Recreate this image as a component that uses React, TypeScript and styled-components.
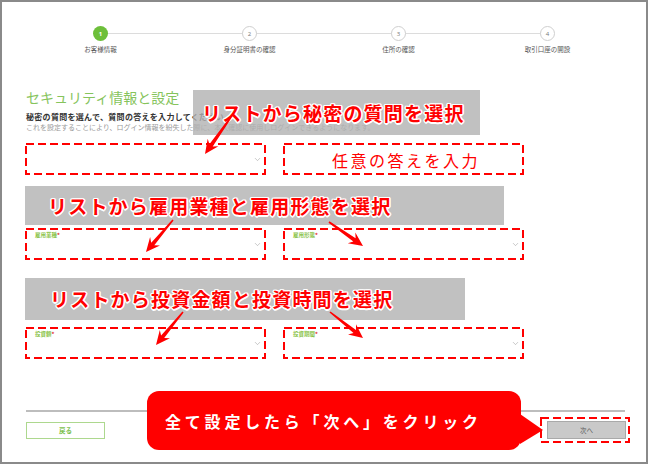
import React from 'react'
import styled, { createGlobalStyle, css } from 'styled-components'
import { ChevronDown } from 'lucide-react'

const GlobalStyle = createGlobalStyle`
	html, body {
		margin: 0;
		padding: 0;
		background: #fff;
	}
	body {
		font-family: 'Noto Sans CJK JP', 'Noto Sans', sans-serif;
	}
`

const steps = ['お客様情報', '身分証明書の確認', '住所の確認', '取引口座の開設']

const arrows = [
	[231, 117, 205, 154],
	[173, 220, 146, 252],
	[329, 222, 363, 246],
	[183, 312, 156, 345],
	[330, 312, 363, 338],
]

const arrowPoints = ([x1, y1, x2, y2]: number[]) => {
	const dx = x2 - x1
	const dy = y2 - y1
	const len = Math.hypot(dx, dy)
	const ux = dx / len
	const uy = dy / len
	const nx = -uy
	const ny = ux
	const head = 14
	const notch = 3.5
	const wing = 6.5
	const neck = 2
	const tail = 0.8
	const bx = x2 - ux * head
	const by = y2 - uy * head
	const kx = x2 - ux * (head - notch)
	const ky = y2 - uy * (head - notch)
	const p = [
		[x1 + nx * tail, y1 + ny * tail],
		[kx + nx * neck, ky + ny * neck],
		[bx + nx * wing, by + ny * wing],
		[x2, y2],
		[bx - nx * wing, by - ny * wing],
		[kx - nx * neck, ky - ny * neck],
		[x1 - nx * tail, y1 - ny * tail],
	]
	return p.map(([x, y]) => `${x.toFixed(1)},${y.toFixed(1)}`).join(' ')
}

const DashedBox = styled.span`
	position: absolute;
	inset: 0;
	pointer-events: none;
	svg {
		display: block;
		width: 100%;
		height: 100%;
		overflow: visible;
	}
`

// red dash-dot frame the annotator drew around each control
const DashFrame = () => (
	<DashedBox>
		<svg>
			<rect
				x="1"
				y="1"
				width="calc(100% - 2px)"
				height="calc(100% - 2px)"
				fill="none"
				stroke="#f00"
				strokeWidth="2"
				strokeDasharray="8 4"
			/>
		</svg>
	</DashedBox>
)

const Frame = styled.div`
	position: relative;
	width: 648px;
	height: 464px;
	box-sizing: border-box;
	border: 2px solid #8a8a8a;
	padding: 24px 21px 0 24px;
	background: #fff;
`

const Stepper = styled.ol`
	position: relative;
	display: grid;
	grid-template-columns: repeat(4, 149px);
	margin: 0;
	padding: 0;
	list-style: none;
	&::before {
		content: '';
		position: absolute;
		top: 7px;
		left: 74px;
		width: 447px;
		height: 1px;
		background: #dcdcdc;
	}
`

const Step = styled.li`
	position: relative;
	z-index: 1;
	display: flex;
	flex-direction: column;
	align-items: center;
	gap: 4px;
`

const StepDot = styled.span<{ $active?: boolean }>`
	width: 15px;
	height: 15px;
	box-sizing: border-box;
	border-radius: 50%;
	display: flex;
	align-items: center;
	justify-content: center;
	font-size: 6px;
	font-family: 'Open Sans', sans-serif;
	${({ $active }) =>
		$active
			? css`
					background: #6dbf3a;
					color: #fff;
					font-weight: 700;
			  `
			: css`
					background: #fff;
					border: 1px solid #cfcfcf;
					color: #777;
			  `}
`

const StepLabel = styled.span`
	font-size: 6.5px;
	line-height: 8px;
	color: #555;
	white-space: nowrap;
`

const Title = styled.h2`
	margin: 36px 0 0;
	font-size: 14px;
	line-height: 16px;
	font-weight: 400;
	color: #86c45c;
`

const Lead = styled.p`
	margin: 7px 0 0;
	font-size: 8px;
	letter-spacing: 0.3px;
	line-height: 10px;
	font-weight: 700;
	color: #333;
	white-space: nowrap;
`

const Note = styled.p`
	margin: 0;
	font-size: 7px;
	line-height: 10px;
	color: #9a9a9a;
	white-space: nowrap;
`

const FieldRow = styled.div<{ $gap: number }>`
	display: grid;
	grid-template-columns: 241px 241px;
	column-gap: 17px;
	margin: ${({ $gap }) => $gap}px 0 0 -1px;
`

const Field = styled.div`
	position: relative;
	height: 32px;
	box-sizing: border-box;
	padding-right: 4px;
	display: flex;
	align-items: center;
	justify-content: flex-end;
	background: #fff;
`

const FieldLabel = styled.span`
	position: absolute;
	top: 4px;
	left: 10px;
	font-size: 5.5px;
	line-height: 7px;
	color: #8bc34a;
	font-weight: 700;
	b {
		color: #e53935;
	}
`

const Separator = styled.hr`
	margin: 51px 0 0;
	border: 0;
	height: 2px;
	background: #bdbdbd;
`

const Footer = styled.div`
	display: flex;
	align-items: center;
	justify-content: space-between;
	margin: 5px -5px 0 0;
`

const BackButton = styled.button`
	width: 79px;
	height: 17px;
	padding: 0;
	border: 1.5px solid #add88e;
	background: #fff;
	color: #7cbf4e;
	font-family: inherit;
	font-size: 6.5px;
	font-weight: 700;
`

const NextFrame = styled.div`
	position: relative;
	padding: 4px 4px 4px 7px;
`

const NextButton = styled.button`
	display: block;
	width: 79px;
	height: 18px;
	padding: 0;
	border: 1px solid #a9a9a9;
	background: #c9c9c9;
	color: #555;
	font-family: inherit;
	font-size: 6.5px;
`

const Overlay = styled.div`
	position: absolute;
	top: -2px;
	left: -2px;
	width: 652px;
	height: 465px;
	pointer-events: none;
`

const Banner = styled.div<{ $x: number; $y: number; $w: number; $h: number; $pad: number }>`
	position: absolute;
	left: ${({ $x }) => $x}px;
	top: ${({ $y }) => $y}px;
	width: ${({ $w }) => $w}px;
	height: ${({ $h }) => $h}px;
	box-sizing: border-box;
	padding-left: ${({ $pad }) => $pad}px;
	display: flex;
	align-items: center;
	background: rgba(178, 178, 178, 0.8);
`

const CalloutText = styled.span`
	color: #f00;
	font-size: 19px;
	line-height: 22px;
	font-weight: 700;
	letter-spacing: 1.2px;
	white-space: nowrap;
	text-shadow: 1.5px 0 0 #fff, -1.5px 0 0 #fff, 0 1.5px 0 #fff, 0 -1.5px 0 #fff, 1px 1px 0 #fff,
		-1px -1px 0 #fff, 1px -1px 0 #fff, -1px 1px 0 #fff;
`

const AnswerHint = styled.span`
	position: absolute;
	left: 332px;
	top: 150px;
	color: #f00;
	font-size: 16px;
	line-height: 20px;
	letter-spacing: 2.5px;
	white-space: nowrap;
`

const ArrowLayer = styled.svg`
	position: absolute;
	inset: 0;
`

const Bubble = styled.div`
	position: absolute;
	left: 147px;
	top: 391px;
	width: 374px;
	height: 59px;
	box-sizing: border-box;
	padding-left: 18px;
	display: flex;
	align-items: center;
	border-radius: 12px;
	background: #f00;
	color: #fff;
	font-size: 16px;
	font-weight: 700;
	letter-spacing: 3.8px;
	white-space: nowrap;
	&::after {
		content: '';
		position: absolute;
		right: -22px;
		top: 23px;
		border-left: 23px solid #f00;
		border-top: 16px solid transparent;
		border-bottom: 14px solid transparent;
	}
`

const Chevron = () => <ChevronDown size={9} color="#9e9e9e" strokeWidth={1.5} />

const App = () => {
	return (
		<>
			<GlobalStyle />
			<Frame>
				<Stepper>
					{steps.map((label, i) => (
						<Step key={label}>
							<StepDot $active={i === 0}>{i + 1}</StepDot>
							<StepLabel>{label}</StepLabel>
						</Step>
					))}
				</Stepper>

				<Title>セキュリティ情報と設定</Title>
				<Lead>秘密の質問を選んで、質問の答えを入力してください。</Lead>
				<Note>
					これを設定することにより、ログイン情報を紛失した際に、本人確認に使用しログインできるようになります。
				</Note>

				<FieldRow $gap={11}>
					<Field>
						<Chevron />
						<DashFrame />
					</Field>
					<Field>
						<DashFrame />
					</Field>
				</FieldRow>

				<FieldRow $gap={53}>
					<Field>
						<FieldLabel>
							雇用業種<b>*</b>
						</FieldLabel>
						<Chevron />
						<DashFrame />
					</Field>
					<Field>
						<FieldLabel>
							雇用形態<b>*</b>
						</FieldLabel>
						<Chevron />
						<DashFrame />
					</Field>
				</FieldRow>

				<FieldRow $gap={67}>
					<Field>
						<FieldLabel>
							投資額<b>*</b>
						</FieldLabel>
						<Chevron />
						<DashFrame />
					</Field>
					<Field>
						<FieldLabel>
							投資期間<b>*</b>
						</FieldLabel>
						<Chevron />
						<DashFrame />
					</Field>
				</FieldRow>

				<Separator />
				<Footer>
					<BackButton>戻る</BackButton>
					<NextFrame>
						<NextButton>次へ</NextButton>
						<DashFrame />
					</NextFrame>
				</Footer>

				<Overlay>
					<Banner $x={193} $y={90} $w={287} $h={45} $pad={9}>
						<CalloutText>リストから秘密の質問を選択</CalloutText>
					</Banner>
					<Banner $x={25} $y={186} $w={479} $h={39} $pad={23}>
						<CalloutText>リストから雇用業種と雇用形態を選択</CalloutText>
					</Banner>
					<Banner $x={25} $y={278} $w={440} $h={42} $pad={25}>
						<CalloutText>リストから投資金額と投資時間を選択</CalloutText>
					</Banner>
					<AnswerHint>任意の答えを入力</AnswerHint>
					<ArrowLayer width={652} height={465} viewBox="0 0 652 465">
						{arrows.map((a, i) => (
							<polygon key={i} points={arrowPoints(a)} fill="#f00" />
						))}
					</ArrowLayer>
					<Bubble>全て設定したら「次へ」をクリック</Bubble>
				</Overlay>
			</Frame>
		</>
	)
}

export default App
